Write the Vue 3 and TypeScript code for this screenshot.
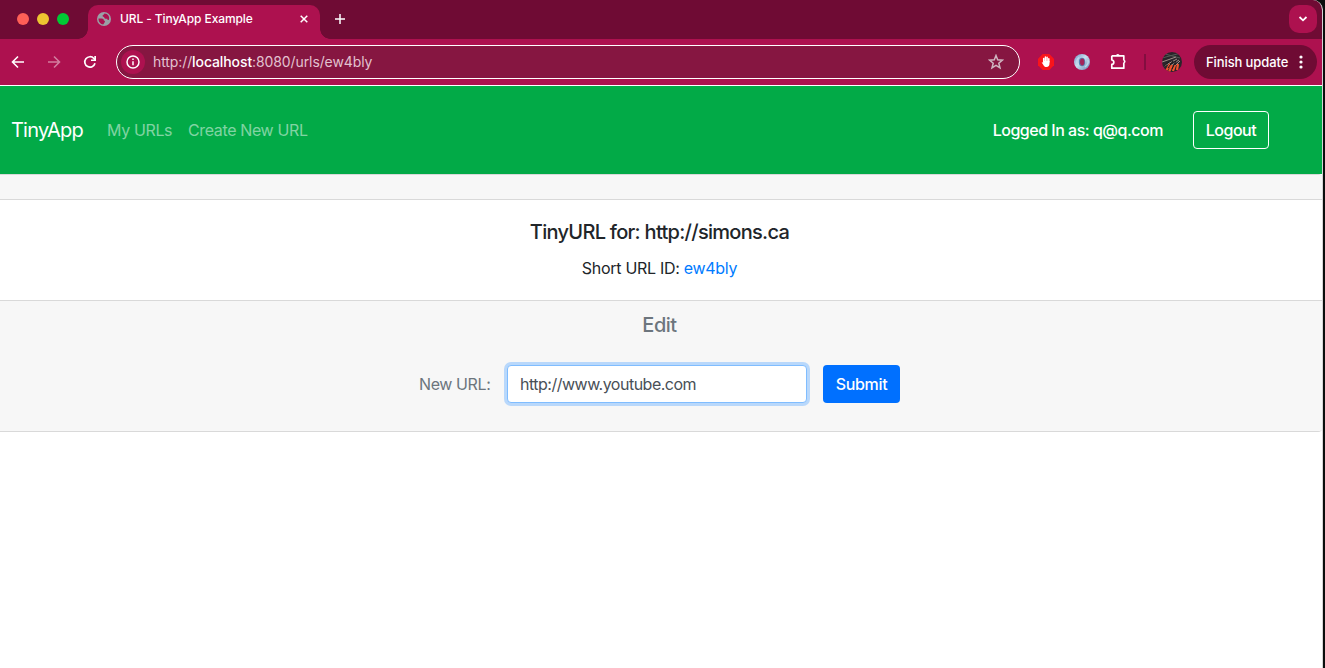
<script setup lang="ts">
import { ref } from 'vue'

const newUrl = ref('http://www.youtube.com')
const feathers = ['M0 10 14 5', 'M2 14 15 7', 'M7 15 17 8', 'M12 15 18 9']
</script>

<template>
  <div class="desktop">
    <div class="window">
      <header class="tabs">
        <div class="lights"><i class="red" /><i class="yellow" /><i class="green" /></div>
        <div class="tab">
          <svg class="globe" width="14" height="14" viewBox="0 0 14 14">
            <circle cx="7" cy="7" r="7" fill="#9aa0a6" />
            <path d="M1.500 6.500h3.200c1.800 0 2.300 1 2.100 2 1.400.2 1.500 1.300.6 2.200L6.200 12.500C3.400 12.200 1.400 9.800 1.500 6.500zM7.400 1.500c0 1.500-1.700 1-1.800 2.300 0 .8.6 1.200 1.500 1.100.2 1.700 1.400 1.900 3.200 1.800 0 1.200.7 1.500 1.600 1.100C13 4.700 10.800 1.400 7.400 1.500z" fill="#ad114f" />
          </svg>
          <span class="tab-title">URL - TinyApp Example</span>
          <svg class="close" width="8" height="8" viewBox="0 0 8 8"><path d="m.7.7 6.600 6.600m0-6.600L.7 7.300" stroke="#fff" stroke-width="1.500" /></svg>
        </div>
        <svg class="plus" width="10" height="10" viewBox="0 0 10 10"><path d="M5 0v10M0 5h10" stroke="#fff" stroke-width="1.500" /></svg>
        <div class="chevron">
          <svg width="10" height="6" viewBox="0 0 10 6"><path d="m1.500 1 3.500 3.300L8.500 1" fill="none" stroke="#fff" stroke-width="1.800" /></svg>
        </div>
      </header>

      <div class="toolbar">
        <svg class="arrow" width="14" height="14" viewBox="0 0 14 14"><path d="M13 7H2M7 1.500 1.500 7 7 12.500" fill="none" stroke="#fff" stroke-width="1.600" /></svg>
        <svg class="arrow faded" width="14" height="14" viewBox="0 0 14 14"><path d="M1 7h11M7 1.500 12.500 7 7 12.500" fill="none" stroke="#fff" stroke-width="1.600" /></svg>
        <svg class="reload" width="14" height="14" viewBox="0 0 14 14"><path d="M12 8.300A5.200 5.200 0 1 1 10.900 3.500L12.200 5" fill="none" stroke="#fff" stroke-width="1.700" /><path d="M11.300 1H13v5H8V4.400h3.300z" fill="#fff" /></svg>
        <div class="address">
          <span class="info">
            <svg width="14" height="14" viewBox="0 0 14 14"><circle cx="7" cy="7" r="6" fill="none" stroke="#fff" stroke-width="1.500" /><path d="M7 6.300v4M7 3.500v1.500" stroke="#fff" stroke-width="1.500" /></svg>
          </span>
          <span class="url">http://<b>localhost</b>:8080/urls/ew4bly</span>
          <svg class="star" width="16" height="16" viewBox="0 0 16 16"><path d="m8 1.500 1.700 4.300 4.700.4-3.600 3 1.200 4.600L8 11.300l-4 2.500 1.200-4.600-3.600-3 4.700-.4z" fill="none" stroke="#cfb5c0" stroke-width="1.500" /></svg>
        </div>
        <svg class="blocker" width="16" height="16" viewBox="0 0 16 16">
          <path d="M4.700 0h6.600L16 4.700v6.600L11.300 16H4.700L0 11.300V4.700z" fill="#f9141b" />
          <path d="M5.700 8V4.400M7.400 8V3M9.100 8V3.200M10.800 8V4.800" stroke="#fff" stroke-width="1.500" stroke-linecap="round" />
          <path d="M5 7h6.500v2.500c0 2-1 3.500-3 3.500-1.700 0-2.500-.8-3.300-2.300L3.700 8.500c.5-.5 1-.2 1.600.4z" fill="#fff" />
        </svg>
        <svg class="ring" width="16" height="16" viewBox="0 0 16 16">
          <defs><linearGradient id="steel" x1="0" y1="0" x2="1" y2="1"><stop offset="0" stop-color="#6e94c5" /><stop offset=".45" stop-color="#c9dfef" /><stop offset="1" stop-color="#6588b6" /></linearGradient></defs>
          <circle cx="8" cy="8" r="8" fill="url(#steel)" />
          <path d="M3 11Q2 6 5 3.500M11 13q4-3 3-7" fill="none" stroke="#bdd5eb" stroke-width="1.500" />
          <ellipse cx="8" cy="8" rx="3.200" ry="4.300" fill="#5685b5" />
          <ellipse cx="8.200" cy="8" rx="2.200" ry="3.400" fill="#a3265c" />
        </svg>
        <svg class="puzzle" width="17" height="17" viewBox="0 0 17 17"><path d="M1.800 2.800h12v4.600M13.800 9.600v5.600h-12v-3.800c2.700-.3 2.700-4.100 0-4.400V2.800" fill="none" stroke="#fff" stroke-width="1.700" stroke-linejoin="round" /><path d="M6 2.700a1.800 1.800 0 0 1 3.600 0zM13.800 6.700a1.800 1.800 0 0 1 0 3.600z" fill="#fff" /></svg>
        <i class="divider" />
        <svg class="avatar" width="20" height="20" viewBox="0 0 20 20">
          <clipPath id="disc"><circle cx="10" cy="10" r="10" /></clipPath>
          <g clip-path="url(#disc)" fill="none">
            <rect width="20" height="20" fill="#29252a" />
            <path d="M0 6 19 1M3 2l15 4" stroke="#545b55" />
            <path v-for="d in feathers" :key="d" :d="d" stroke="#a1908a" />
            <path d="M4 19 8 12M7 20l3-7M11 19l2-6M15 18l1-6" stroke="#f0532d" stroke-width="2.200" />
            <path d="M6 16l5-7M10 17l4-8M2 14l5-4" stroke="#161719" />
          </g>
        </svg>
        <div class="update"><span>Finish update</span><svg width="4" height="14" viewBox="0 0 4 14" fill="#fff"><circle cx="2" cy="2" r="1.600" /><circle cx="2" cy="7" r="1.600" /><circle cx="2" cy="12" r="1.600" /></svg></div>
      </div>

      <nav class="navbar">
        <a class="brand">TinyApp</a>
        <a class="link my">My URLs</a>
        <a class="link create">Create New URL</a>
        <span class="user">Logged In as: q@q.com</span>
        <button class="logout">Logout</button>
      </nav>

      <main class="card">
        <div class="card-header" />
        <section class="card-body">
          <h5 class="title">TinyURL for: http://simons.ca</h5>
          <p class="short">Short URL ID: <a>ew4bly</a></p>
        </section>
        <footer class="card-footer">
          <h5 class="edit">Edit</h5>
          <form class="form" @submit.prevent>
            <label for="new-url">New URL:</label>
            <input id="new-url" v-model="newUrl" type="text" spellcheck="false">
            <button type="submit">Submit</button>
          </form>
        </footer>
      </main>
    </div>
  </div>
</template>

<style>
body { margin: 0; overflow: hidden; }
</style>

<style scoped>
* { box-sizing: border-box; }
.desktop { width: 1325px; height: 668px; background: #0b0e0d; font-family: Inter, "Liberation Sans", sans-serif; font-size: 16px; line-height: 24px; letter-spacing: -0.3px; white-space: nowrap; overflow: hidden; }
.window { width: 1323px; height: 668px; background: #fff; border-right: 1px solid #d5d5d5; border-top-right-radius: 10px; overflow: hidden; }
svg { display: block; flex: none; }
.tabs { height: 39px; background: #6f0b34; display: flex; align-items: flex-start; }
.lights { display: flex; gap: 8px; padding: 13px 0 0 17px; width: 88px; flex: none; }
.lights i { width: 12px; height: 12px; border-radius: 50%; }
.red { background: #ff5f57; }
.yellow { background: #edc531; }
.green { background: #00ca35; }
.tab { position: relative; width: 232px; height: 34px; margin-top: 5px; border-radius: 10px 10px 0 0; background: #ad114f; color: #fff; display: flex; align-items: center; padding: 0 12px 6px 9px; }
.tab::before, .tab::after { content: ""; position: absolute; bottom: 0; width: 10px; height: 10px; }
.tab::before { left: -10px; background: radial-gradient(circle at 0 0, transparent 9.500px, #ad114f 10px); }
.tab::after { right: -10px; background: radial-gradient(circle at 100% 0, transparent 9.500px, #ad114f 10px); }
.tab-title { margin-left: 9px; font-size: 12px; font-weight: 500; letter-spacing: -0.1px; line-height: 16px; }
.close { margin-left: auto; }
.plus { margin: 14px 0 0 15px; }
.chevron { margin: 5px 5px 0 auto; width: 28px; height: 28px; border-radius: 10px; background: #ad114f; display: grid; place-items: center; }
.toolbar { height: 47px; background: #ad114f; border-bottom: 1px solid #fff; display: flex; align-items: center; padding: 0 5px 0 11px; }
.arrow { margin-right: 22px; }
.faded { opacity: .45; }
.address { width: 904px; height: 34px; margin-left: 19px; border: 1px solid #fff; border-radius: 17px; background: #861641; display: flex; align-items: center; padding: 0 15px 0 4px; }
.info { width: 24px; height: 24px; border-radius: 50%; background: #ad114f; display: grid; place-items: center; }
.url { margin-left: 8px; color: #e2c2cf; font-size: 14px; letter-spacing: -0.1px; }
.url b { color: #fff; font-weight: 500; }
.star { margin-left: auto; }
.blocker { margin-left: 18px; }
.ring { margin-left: 20px; }
.puzzle { margin: 0 0 2px 20px; }
.divider { width: 2px; height: 16px; margin-left: 17px; background: #830e40; }
.avatar { margin-left: 16px; }
.update { margin-left: auto; width: 123px; height: 34px; border-radius: 17px; background: #6f0b34; color: #fff; font-size: 13px; font-weight: 500; letter-spacing: -0.1px; display: flex; align-items: center; justify-content: space-between; padding: 0 14px 0 12px; }
.navbar { height: 88px; background: #02aa47; color: #fff; display: flex; align-items: center; padding: 0 53px 0 11px; }
.brand { width: 96px; font-size: 20px; letter-spacing: -0.8px; }
.link { color: rgba(255, 255, 255, .5); letter-spacing: -0.37px; }
.my { width: 81px; }
.user { margin-left: auto; margin-right: 30px; font-weight: 500; letter-spacing: -0.49px; }
.logout { width: 76px; height: 38px; border: 1px solid #fff; border-radius: 4px; background: transparent; color: #fff; font: 500 16px/24px Inter, sans-serif; letter-spacing: -0.5px; padding: 0; }
.card { border: solid #d9d9d9; border-width: 1px 0; border-radius: 0 4px 4px 0; overflow: hidden; }
.card-header { height: 25px; background: #f7f7f7; border-bottom: 1px solid #d9d9d9; }
.card-body { height: 100px; padding: 20px 3px 0 0; text-align: center; color: #212529; }
.title { margin: 0; font-size: 20px; line-height: 24px; font-weight: 500; letter-spacing: -0.71px; }
.short { margin: 12px 0 0; }
.short a { color: #007bff; }
.card-footer { height: 131px; border-top: 1px solid #d9d9d9; background: #f7f7f7; color: #6c757d; padding: 12px 3px 0 0; text-align: center; }
.edit { margin: 0; font-size: 20px; line-height: 24px; font-weight: 500; letter-spacing: -0.5px; }
.form { display: flex; align-items: center; margin: 28px 0 0 419px; }
.form label { width: 88px; text-align: left; letter-spacing: -0.4px; }
.form input { width: 300px; height: 38px; border: 1px solid #80bdff; border-radius: 4px; box-shadow: 0 0 0 3px #b9d8fb; background: #fff; color: #495057; padding: 0 12px; font: 16px/24px Inter, sans-serif; letter-spacing: -0.5px; outline: none; }
.form button { margin-left: 16px; width: 77px; height: 38px; border: 0; border-radius: 4px; background: #0070ff; color: #fff; font: 500 16px/24px Inter, sans-serif; letter-spacing: -0.3px; padding: 0; }
</style>
